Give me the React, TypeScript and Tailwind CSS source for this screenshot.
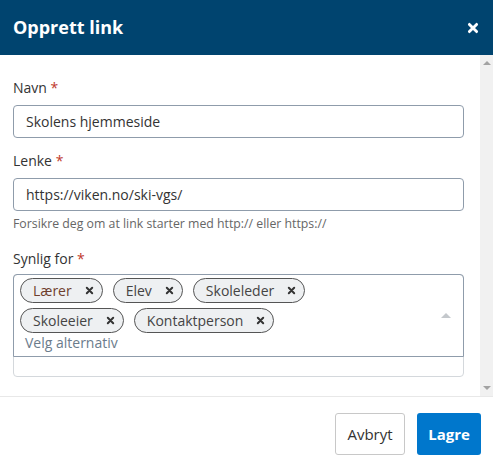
import React from "react"

const CHIPS = [
  ["Lærer", "Elev", "Skoleleder"],
  ["Skoleeier", "Kontaktperson"],
]

function XIcon({ className, width = 2.2 }: { className?: string; width?: number }) {
  return (
    <svg viewBox="0 0 10 10" className={className} fill="none" stroke="currentColor" strokeWidth={width} strokeLinecap="round">
      <path d="M2 2 L8 8 M8 2 L2 8" />
    </svg>
  )
}

function Chip({ label, first }: { label: string; first?: boolean }) {
  return (
    <span className="flex h-[25px] items-center gap-[13px] rounded-full border border-[#555] bg-[#eef0f2] pl-[12px] pr-[8px] text-[14px]">
      <span className={first ? "text-[#6e3f2e]" : "text-[#444]"}>{label}</span>
      <XIcon className="h-[9px] w-[9px] text-[#333]" />
    </span>
  )
}

function Label({ text }: { text: string }) {
  return (
    <div className="text-[14px] leading-[20px] text-[#333]">
      {text} <span className="text-[#c0392b]">*</span>
    </div>
  )
}

export default function App() {
  return (
    <div className="flex h-[469px] w-[493px] flex-col bg-white font-['Open_Sans',sans-serif]">
      {/* Header */}
      <div className="flex h-[55px] shrink-0 items-center justify-between bg-[#00446f] pl-[13px] pr-[14px]">
        <h1 className="text-[18px] font-bold text-white">Opprett link</h1>
        <XIcon className="h-[12px] w-[12px] text-white" width={2.4} />
      </div>

      {/* Body */}
      <div className="flex h-[341px] shrink-0">
        <div className="flex-1 pl-[13px] pr-[16px] pt-[23px]">
          <Label text="Navn" />
          <input
            readOnly
            value="Skolens hjemmeside"
            className="mt-[7px] h-[33px] w-full rounded-[4px] border border-[#8f9cab] px-[12px] text-[14px] text-[#333] outline-none"
          />

          <div className="mt-[13px]">
            <Label text="Lenke" />
          </div>
          <input
            readOnly
            value="https://viken.no/ski-vgs/"
            className="mt-[7px] h-[33px] w-full rounded-[4px] border border-[#8f9cab] px-[12px] text-[14px] text-[#333] outline-none"
          />
          <div className="mt-[5px] text-[12.3px] leading-[16px] text-[#666]">
            Forsikre deg om at link starter med http:// eller https://
          </div>

          <div className="mt-[17px]">
            <Label text="Synlig for" />
          </div>
          <div className="mt-[5px] h-[103px] rounded-[4px] border border-[#d4d8dc]">
            <div className="-m-px flex rounded-t-[4px] border border-[#8f9cab] pb-[3px] pl-[6px] pr-[12px] pt-[3px]">
              <div className="flex-1">
                {CHIPS.map((row, i) => (
                  <div key={i} className={`flex gap-[10px] ${i > 0 ? "mt-[5px]" : ""}`}>
                    {row.map((c) => (
                      <Chip key={c} label={c} first={c === "Lærer"} />
                    ))}
                  </div>
                ))}
                <div className="pl-[5px] text-[14px] leading-[20px] text-[#6b7c8c]">Velg alternativ</div>
              </div>
              <div className="flex items-center">
                <span className="h-0 w-0 border-x-[5px] border-b-[5px] border-x-transparent border-b-[#c4c8cc]" />
              </div>
            </div>
          </div>
        </div>

        {/* Scrollbar */}
        <div className="flex w-[13px] flex-col items-center justify-between bg-[#f1f1f1] py-[6px]">
          <span className="h-0 w-0 border-x-[4px] border-b-[4px] border-x-transparent border-b-[#a3a3a3]" />
          <span className="h-0 w-0 border-x-[4px] border-t-[4px] border-x-transparent border-t-[#a3a3a3]" />
        </div>
      </div>

      {/* Footer */}
      <div className="flex flex-1 justify-end gap-[12px] border-t border-[#e8e8e8] pr-[12px] pt-[16px]">
        <button className="h-[42px] w-[70px] rounded-[3px] border border-[#c8c8c8] bg-white text-[15px] font-medium text-[#333]">
          Avbryt
        </button>
        <button className="h-[42px] w-[64px] rounded-[3px] bg-[#0077cc] text-[15px] font-bold text-white">
          Lagre
        </button>
      </div>
    </div>
  )
}
